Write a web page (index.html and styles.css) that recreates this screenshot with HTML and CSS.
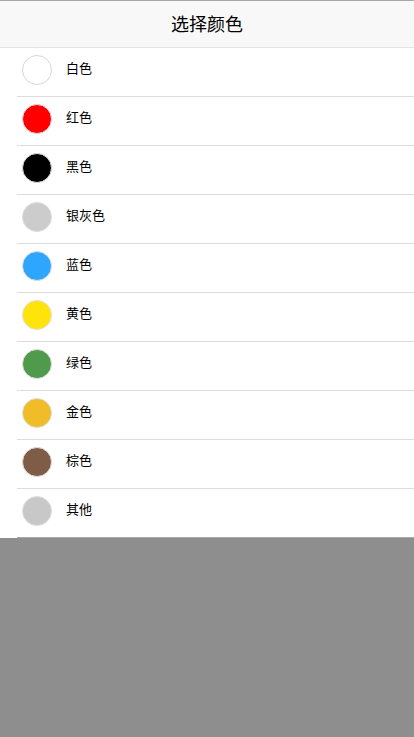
FILE: index.html
```html
<!DOCTYPE html>
<html lang="zh">
<head>
<meta charset="utf-8">
<link rel="stylesheet" href="styles.css">
</head>
<body>
<div class="page">
  <header class="bar">选择颜色</header>
  <ul class="list">
    <li class="row"><span class="dot c-white"></span><span class="name">白色</span></li>
    <li class="row"><span class="dot c-red"></span><span class="name">红色</span></li>
    <li class="row"><span class="dot c-black"></span><span class="name">黑色</span></li>
    <li class="row"><span class="dot c-silver"></span><span class="name">银灰色</span></li>
    <li class="row"><span class="dot c-blue"></span><span class="name">蓝色</span></li>
    <li class="row"><span class="dot c-yellow"></span><span class="name">黄色</span></li>
    <li class="row"><span class="dot c-green"></span><span class="name">绿色</span></li>
    <li class="row"><span class="dot c-gold"></span><span class="name">金色</span></li>
    <li class="row"><span class="dot c-brown"></span><span class="name">棕色</span></li>
    <li class="row"><span class="dot c-other"></span><span class="name">其他</span></li>
  </ul>
</div>
</body>
</html>
```
FILE: styles.css
```css
* { box-sizing: border-box; }
html, body { margin: 0; padding: 0; }
body {
  background: #8e8e8e;
  font-family: "Noto Sans CJK SC", "Noto Sans", sans-serif;
  color: #000;
  height: 737px;
  overflow: hidden;
}
.page { background: #fff; }
.bar {
  height: 48px;
  background: #f8f8f8;
  border-top: 1px solid #a8a8a8;
  border-bottom: 1px solid #e3e3e3;
  display: flex;
  align-items: center;
  justify-content: center;
  font-size: 18px;
  color: #000;
  padding-bottom: 2px;
}
.list { list-style: none; margin: 0; padding: 0 0 0 17px; }
.row {
  height: 49px;
  border-bottom: 1px solid #dcdcdc;
  display: flex;
  align-items: flex-start;
  padding-top: 7px;
}
.row:last-child { border-bottom-color: #a9a9a9; }
.dot {
  width: 30px;
  height: 30px;
  border-radius: 50%;
  margin-left: 5px;
  border: 1px solid #dedede;
  flex: none;
}
.name {
  margin-left: 14px;
  font-size: 13px;
  line-height: 26px;
}
.c-white { background: #fff; border-color: #d6d6d6; }
.c-red { background: #ff0000; }
.c-black { background: #000; }
.c-silver { background: #cccccc; }
.c-blue { background: #2ea6fe; }
.c-yellow { background: #ffe40c; }
.c-green { background: #4f9a4b; }
.c-gold { background: #f0bd28; }
.c-brown { background: #7e5c46; }
.c-other { background: #c8c8c8; }
```
